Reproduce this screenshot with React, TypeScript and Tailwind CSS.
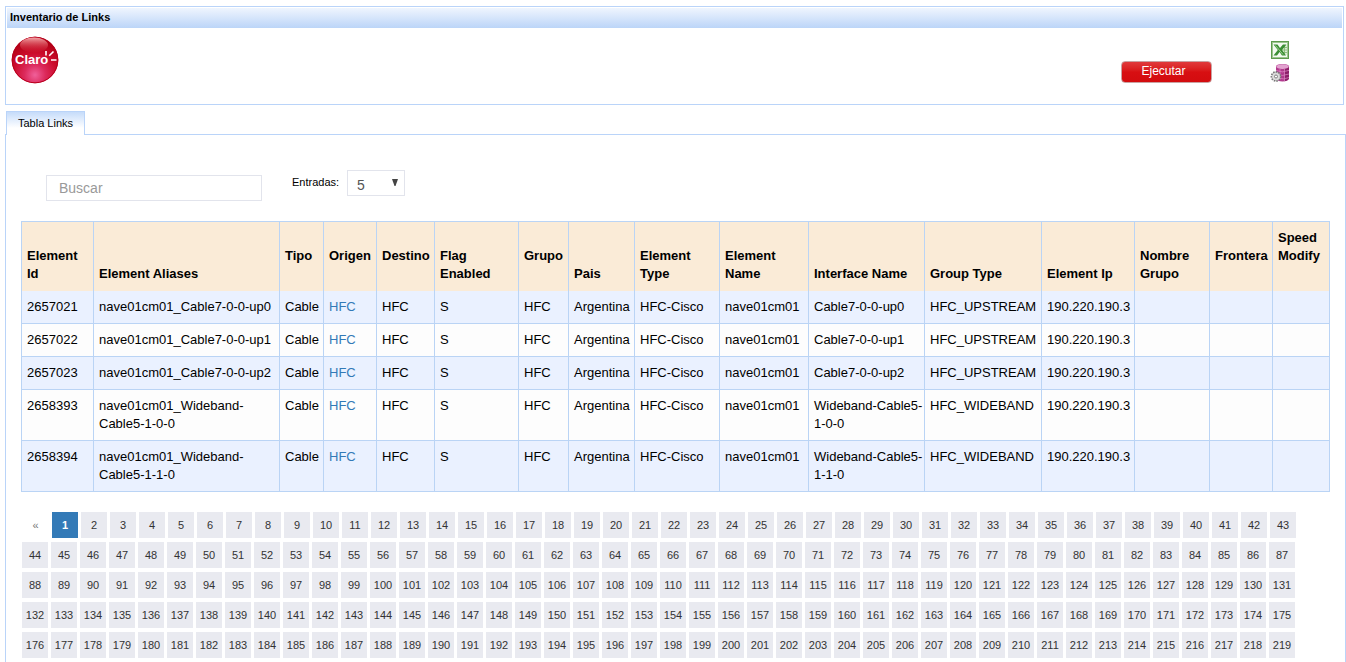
import React from "react";

type Column = { label: string; width: string; padding: string };

const columns: Column[] = [
  { label: "Element Id", width: "w-[72px]", padding: "pr-[5px] pb-2" },
  { label: "Element Aliases", width: "w-[186px]", padding: "pb-2" },
  { label: "Tipo", width: "w-[44px]", padding: "pb-[26px]" },
  { label: "Origen", width: "w-[53px]", padding: "pb-[26px]" },
  { label: "Destino", width: "w-[58px]", padding: "pb-[26px]" },
  { label: "Flag Enabled", width: "w-[84px]", padding: "pb-2" },
  { label: "Grupo", width: "w-[50px]", padding: "pb-[26px]" },
  { label: "Pais", width: "w-[66px]", padding: "pb-2" },
  { label: "Element Type", width: "w-[85px]", padding: "pb-2" },
  { label: "Element Name", width: "w-[89px]", padding: "pb-2" },
  { label: "Interface Name", width: "w-[116px]", padding: "pb-2" },
  { label: "Group Type", width: "w-[117px]", padding: "pb-2" },
  { label: "Element Ip", width: "w-[93px]", padding: "pb-2" },
  { label: "Nombre Grupo", width: "w-[75px]", padding: "pb-2" },
  { label: "Frontera", width: "w-[63px]", padding: "pb-[26px]" },
  { label: "Speed Modify", width: "w-[57px]", padding: "pb-[26px]" },
];

const links = [
  { id: "2657021", port: "Cable7-0-0-up0", type: "HFC_UPSTREAM" },
  { id: "2657022", port: "Cable7-0-0-up1", type: "HFC_UPSTREAM" },
  { id: "2657023", port: "Cable7-0-0-up2", type: "HFC_UPSTREAM" },
  { id: "2658393", port: "Wideband-Cable5-1-0-0", type: "HFC_WIDEBAND" },
  { id: "2658394", port: "Wideband-Cable5-1-1-0", type: "HFC_WIDEBAND" },
];

const pages = Array.from({ length: 219 }, (_, i) => i + 1);

function ClaroLogo() {
  return (
    <svg viewBox="0 0 48 48" className="size-12" role="img" aria-label="Claro">
      <defs>
        <radialGradient id="ball" cx="50%" cy="82%" r="75%">
          <stop offset="0" stopColor="#f0609a" />
          <stop offset="0.3" stopColor="#dc2a5c" />
          <stop offset="0.62" stopColor="#cc0c2c" />
          <stop offset="1" stopColor="#b00014" />
        </radialGradient>
        <linearGradient id="shine" x1="0" y1="0" x2="0" y2="1">
          <stop offset="0" stopColor="#ffc4c4" stopOpacity="0.85" />
          <stop offset="1" stopColor="#e03040" stopOpacity="0.05" />
        </linearGradient>
      </defs>
      <circle cx="24" cy="24" r="23.3" fill="url(#ball)" />
      <circle cx="24" cy="24" r="22.8" fill="none" stroke="#b8001c" strokeWidth="1" />
      <ellipse cx="23" cy="9" rx="14" ry="7.5" fill="url(#shine)" />
      <text x="4" y="28" fill="#fff" fontSize="13" fontWeight="bold" fontFamily="Liberation Sans, sans-serif">
        Claro
      </text>
      <path d="M35 15v4.5M38.2 19.8l4.3-4.3M40 24h5.5" stroke="#fff" strokeWidth="1.6" fill="none" />
    </svg>
  );
}

function ExcelIcon() {
  return (
    <svg viewBox="0 0 18 18" className="size-[18px]" aria-hidden="true">
      <rect x="0.5" y="0.5" width="17" height="17" fill="#fff" stroke="#5d9a4c" />
      <rect x="1.5" y="1.5" width="15" height="15" fill="#f4faf1" stroke="#9cc58f" />
      <path d="M11 4h5v10h-5z" fill="#d9ebd2" />
      <path d="M11 6.5h5M11 9h5M11 11.5h5M13.5 4v10" stroke="#7fb46d" strokeWidth="0.8" />
      <path d="M2.5 3.5h4L9 7l3-3.5h3.5L11 9l4 5.5h-4L8.6 11 6 14.5H2.5L6.8 9z" fill="#3c8f35" />
      <path d="M4.5 4.5l7.5 9" stroke="#a8d59b" strokeWidth="0.9" />
    </svg>
  );
}

function DatabaseIcon() {
  return (
    <svg viewBox="0 0 20 20" className="size-5" aria-hidden="true">
      <path d="M6 3.6Q6 1 12.5 1T19 3.6v12.2q-1 2.4-6.5 2.7Q7 18.4 6 16z" fill="#b23a8e" />
      <ellipse cx="12.5" cy="3.6" rx="6.2" ry="2.3" fill="#e2a2cf" />
      <path d="M14.5 6q4-.6 4.5-2v11.8q-.8 1.9-4.5 2.5z" fill="#8c2069" />
      <path d="M6 7.4q6 3 13 0M6 11q6 3 13 0M8 15q6 2 11-.5M10 6v11M14.5 6v12" stroke="#dd8ac4" strokeWidth="0.7" fill="none" />
      <circle cx="6" cy="13.5" r="4.6" fill="#c9c9c9" stroke="#777" strokeWidth="1.6" strokeDasharray="1.5 1.1" />
      <circle cx="6" cy="13.5" r="3.6" fill="#dcdcdc" />
      <circle cx="6" cy="13.5" r="1.5" fill="#fff" stroke="#666" strokeWidth="0.8" />
    </svg>
  );
}

function HeaderPanel() {
  return (
    <header className="mr-[2px] h-[99px] border border-[#bad4f9] p-px">
      <h1 className="h-5 bg-linear-to-b from-[#eff5fe] to-[#bcd5f8] pl-[3px] text-[11px] leading-[18px] font-bold">
        Inventario de Links
      </h1>
      <div className="flex items-start justify-between pt-2 pr-[52px] pl-1">
        <ClaroLogo />
        <div className="flex items-start gap-[58px] pt-[5px]">
          <button
            type="button"
            className="mt-5 flex h-[22px] w-[91px] justify-center rounded-[4px] border border-[#c9a3a3] bg-linear-to-b from-[#e0393b] via-[#d80f12] to-[#d30c0f] pr-[6px] text-[12px] leading-[18px] text-white"
          >
            Ejecutar
          </button>
          <div className="flex flex-col items-center gap-1">
            <button type="button" aria-label="Exportar a Excel">
              <ExcelIcon />
            </button>
            <button type="button" aria-label="Exportar base de datos">
              <DatabaseIcon />
            </button>
          </div>
        </div>
      </div>
    </header>
  );
}

function Filters() {
  return (
    <div className="flex h-[31px] items-start pl-[25px]">
      <input
        type="text"
        aria-label="Buscar"
        placeholder="Buscar"
        className="mt-[5px] h-[26px] w-[216px] border border-[#e2e4ec] px-3 text-[14px] text-[#555] outline-none placeholder:text-[#999]"
      />
      <label htmlFor="entries" className="ml-[30px] text-[11px] leading-6">
        Entradas:
      </label>
      <div className="relative ml-2">
        <select
          id="entries"
          defaultValue="5"
          className="h-[26px] w-[58px] appearance-none border border-[#e2e4ec] bg-white pt-1 pl-[9px] text-[14px] leading-5 text-[#555]"
        >
          <option>5</option>
          <option>10</option>
          <option>25</option>
        </select>
        <svg viewBox="0 0 6 7" className="pointer-events-none absolute top-[9px] right-[7px] h-[7px] w-[6px]" aria-hidden="true">
          <path d="M0 0h6L3.5 7h-1z" fill="#444" />
        </svg>
      </div>
    </div>
  );
}

function LinksTable() {
  return (
    <table className="mt-5 w-full table-fixed border-collapse border border-[#bad4f5] text-[13px] leading-[18px]">
      <thead className="bg-[#faebd7]">
        <tr>
          {columns.map((c) => (
            <th
              key={c.label}
              scope="col"
              className={`${c.width} ${c.padding} h-[69px] border-x border-[#bad4f5] pt-1.5 pl-[5px] text-left align-bottom font-bold`}
            >
              {c.label}
            </th>
          ))}
        </tr>
      </thead>
      <tbody>
        {links.map((l) => {
          const cells = [
            l.id,
            `nave01cm01_${l.port}`,
            "Cable",
            <a href="#hfc" className="text-[#337ab7]">HFC</a>,
            "HFC",
            "S",
            "HFC",
            "Argentina",
            "HFC-Cisco",
            "nave01cm01",
            l.port,
            l.type,
            "190.220.190.3",
            "",
            "",
            "",
          ];
          return (
            <tr key={l.id} className="odd:bg-[#eaf1ff] even:bg-[#fdfdfd]">
              {cells.map((cell, i) => (
                <td key={i} className="border-x border-b border-[#bad4f5] py-[7px] pl-[5px] align-top">
                  {cell}
                </td>
              ))}
            </tr>
          );
        })}
      </tbody>
    </table>
  );
}

function Pagination() {
  return (
    <nav aria-label="Paginas" className="mt-5 flex flex-wrap gap-x-[3px] gap-y-1 pr-5 pl-px text-[11px] leading-[26px]">
      <button type="button" aria-label="Anterior" className="w-[27px] text-center text-[#777]">
        «
      </button>
      {pages.map((p) => (
        <a
          key={p}
          href={`#${p}`}
          className={
            p === 1
              ? "h-[26px] w-[26px] bg-[#337ab7] text-center font-bold text-white"
              : "h-[26px] w-[26px] bg-[#e9eaf0] text-center text-[#333]"
          }
        >
          {p}
        </a>
      ))}
    </nav>
  );
}

export default function App() {
  return (
    <div className="flex min-h-screen flex-col bg-white pt-1.5 pl-[5px] font-['Liberation_Sans',Arial,sans-serif] text-black">
      <HeaderPanel />
      <div role="tablist" className="mt-1.5 flex pl-px">
        <button
          type="button"
          role="tab"
          aria-selected="true"
          className="relative z-10 -mb-px h-6 border border-b-0 border-[#bad4f9] bg-linear-to-b from-[#c6dcfa] to-white to-70% px-[11px] text-[11px]"
        >
          Tabla Links
        </button>
      </div>
      <main className="flex-1 border border-b-0 border-[#bad4f9] px-[15px] pt-[35px] pb-1">
        <Filters />
        <LinksTable />
        <Pagination />
      </main>
    </div>
  );
}
